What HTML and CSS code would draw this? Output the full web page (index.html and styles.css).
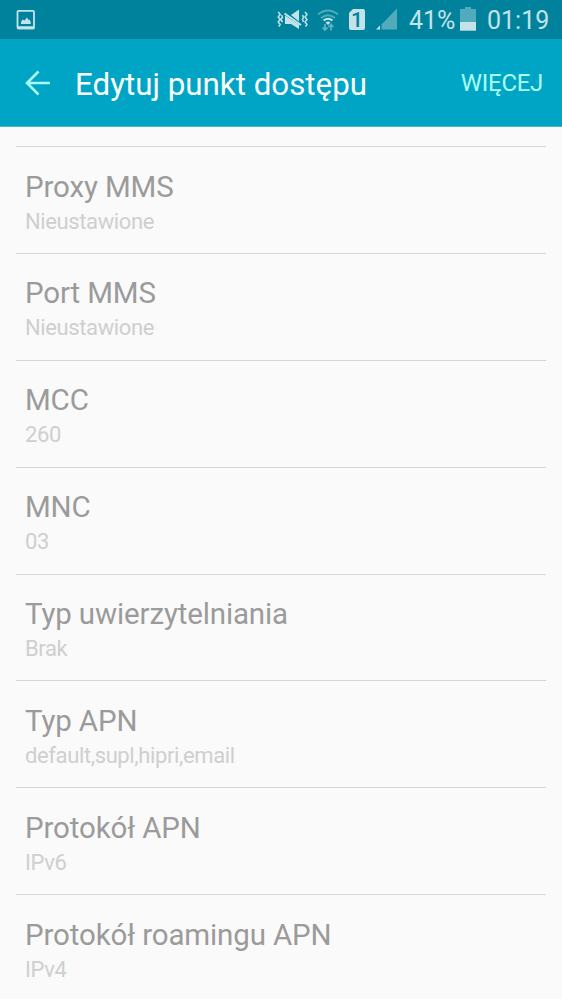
FILE: index.html
```html
<!DOCTYPE html>
<html lang="pl">
<head>
<meta charset="utf-8">
<title>Edytuj punkt dostępu</title>
<link rel="stylesheet" href="styles.css">
</head>
<body>
<header class="status">
  <svg class="picture" width="20" height="22" viewBox="0 0 20 22"><rect x="1.500" y="1.800" width="16.500" height="17.500" rx="1" fill="none" stroke="currentColor" stroke-width="1.800"/><path d="M1 17.200h17.500v3H1zM5 15v-2l1.500-2.500 2 1 2.500-3 1.500 2.500 1-.5 1.200 2.500v2z" fill="currentColor"/></svg>
  <svg class="vibrate" width="32" height="22" viewBox="0 0 32 22"><g fill="none" stroke="currentColor" stroke-width="1.500"><path d="M1.200 3l2 2.500-2 2.500 2 2.500-2 2.500 2 2.500-1.500 2M4.500 6L5.500 8 4 10.500 5.500 13M28 3l2 2.500-2 2.500 2 2.500-2 2.500 2 2.500-1.500 2M25.500 6l1 2-1 2.500 1 2.500" stroke-linejoin="round"/></g><path d="M14 6l8-5.500v12zM8 6.500l14 9V20l-8-5H8z" fill="currentColor"/><path d="M7.500 4.500l16.500 11.500" stroke="currentColor" stroke-width="2"/></svg>
  <svg class="wifi" width="22" height="24" viewBox="0 0 22 24"><g fill="none" stroke="currentColor" stroke-width="2"><path d="M1 5.500Q11-2.500 21 5.500M4 9q7-5.500 14 0" opacity=".42"/><path d="M6.500 11.500q4.500-3.500 9 0"/></g><path d="M8.500 13.500q2.500-1.800 5 0L11 16z" fill="currentColor"/><path d="M8 15v6M5.500 18.500L8 21l2.500-2.500M14 21.500v-6M11.500 18l2.500-2.500 2.500 2.500" fill="none" stroke="currentColor" stroke-width="1.700" opacity=".5"/></svg>
  <span class="sim">1</span>
  <svg class="signal" width="22" height="22" viewBox="0 0 22 22"><path d="M5.500 16.500L21 .5v21H5.500z" fill="currentColor" opacity=".42"/><path d="M0 21.500l4-4v4z" fill="currentColor"/></svg>
  <span class="percent">41%</span>
  <svg class="battery" width="16" height="24" viewBox="0 0 16 24"><path d="M0 2h5V0h6v2h5v22H0z" fill="currentColor" opacity=".42"/><path d="M0 15h16v8.500H0z" fill="currentColor"/></svg>
  <time class="clock">01:19</time>
</header>
<nav class="bar">
  <svg class="back" width="26" height="26" viewBox="0 0 26 26"><path d="M25 13H2M13.500 1.500L2 13l11.500 11.500" fill="none" stroke="currentColor" stroke-width="2.600"/></svg>
  <h1>Edytuj punkt dostępu</h1>
  <span class="more">WIĘCEJ</span>
</nav>
<main>
  <section class="row"><h2>Proxy MMS</h2><p>Nieustawione</p></section>
  <section class="row"><h2>Port MMS</h2><p>Nieustawione</p></section>
  <section class="row"><h2>MCC</h2><p>260</p></section>
  <section class="row"><h2>MNC</h2><p>03</p></section>
  <section class="row"><h2>Typ uwierzytelniania</h2><p>Brak</p></section>
  <section class="row"><h2>Typ APN</h2><p>default,supl,hipri,email</p></section>
  <section class="row"><h2>Protokół APN</h2><p>IPv6</p></section>
  <section class="row"><h2>Protokół roamingu APN</h2><p>IPv4</p></section>
</main>
</body>
</html>
```
FILE: styles.css
```css
* { box-sizing: border-box; }
body {
  margin: 0;
  height: 999px;
  overflow: hidden;
  background: #fafafa;
  font-family: Roboto, "Liberation Sans", sans-serif;
}
h1, h2, p { margin: 0; font-weight: 400; }
svg { display: block; flex: none; }
.status {
  display: flex;
  align-items: flex-start;
  height: 39px;
  padding: 0 0 0 16px;
  background: #00829d;
  color: #c3e3e9;
}
.picture { margin-top: 9px; }
.vibrate { margin: 9px 0 0 241px; }
.wifi { margin: 9px 0 0 8px; }
.sim {
  flex: none;
  width: 16px;
  height: 21px;
  margin: 9px 0 0 10px;
  border-radius: 2px;
  clip-path: polygon(4px 0, 100% 0, 100% 100%, 0 100%, 0 4px);
  background: #c3e3e9;
  color: #00829d;
  font-size: 21px;
  font-weight: 500;
  line-height: 22px;
  text-align: center;
}
.signal { margin: 8px 0 0 11px; }
.percent, .clock { flex: none; font-size: 25px; line-height: 30px; white-space: nowrap; }
.percent { width: 46px; margin: 6px 0 0 11px; }
.battery { margin: 7px 0 0 5px; }
.clock { margin: 6px 0 0 11px; }
.bar {
  display: flex;
  align-items: center;
  height: 88px;
  padding: 0 19px 0 25px;
  border-bottom: 1px solid #50b2c6;
  background: #00a5c5;
  color: #a9fcf3;
}
h1 { margin: 4px 0 0 24px; color: #fafdfe; font-size: 31.3px; line-height: 40px; white-space: nowrap; }
.more { margin: 1px 0 0 auto; font-size: 24px; letter-spacing: -.3px; line-height: 30px; }
main { padding: 19px 16px 0; }
.row {
  height: 106.9px;
  padding: 22.6px 9px 0;
  border-top: 1px solid #d5d6d6;
  white-space: nowrap;
}
h2 { color: #9b9b9b; font-size: 29.5px; letter-spacing: -.14px; line-height: 35px; }
p { margin-top: 4px; color: #cfcfcf; font-size: 22px; letter-spacing: -.38px; line-height: 26px; }
```
